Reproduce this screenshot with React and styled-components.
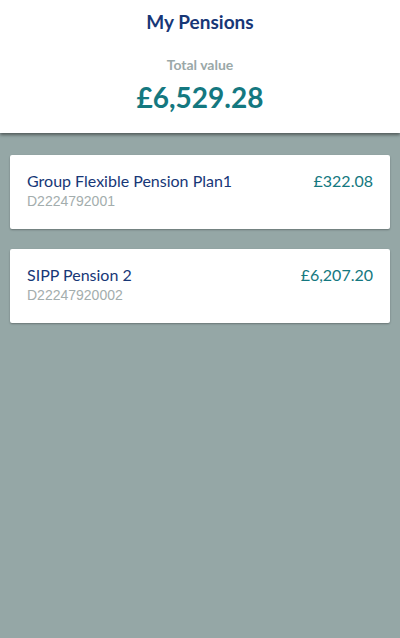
import styled, { createGlobalStyle } from "styled-components";

const GlobalStyle = createGlobalStyle`
  html, body {
    margin: 0;
    padding: 0;
    background: #95a7a6;
  }
  body {
    font-family: Lato, "Open Sans", sans-serif;
  }
`;

const pensions = [
  { name: "Group Flexible Pension Plan1", ref: "D2224792001", value: "£322.08" },
  { name: "SIPP Pension 2", ref: "D22247920002", value: "£6,207.20" },
];

const Page = styled.div`
  min-height: 638px;
  background: #95a7a6;
`;

const Header = styled.header`
  background: #fff;
  height: 133px;
  box-sizing: border-box;
  padding-top: 10px;
  display: flex;
  flex-direction: column;
  align-items: center;
  box-shadow: 0 2px 3px rgba(0, 0, 0, 0.45);
  position: relative;
`;

const Title = styled.h1`
  margin: 0;
  font-size: 19px;
  font-weight: 700;
  color: #173777;
  line-height: 24px;
`;

const TotalLabel = styled.div`
  margin-top: 22px;
  font-size: 14px;
  font-weight: 700;
  color: #9aa8a8;
  line-height: 18px;
`;

const TotalValue = styled.div`
  margin-top: 6px;
  font-size: 28px;
  font-weight: 700;
  color: #147880;
  line-height: 34px;
`;

const List = styled.div`
  display: flex;
  flex-direction: column;
  gap: 20px;
  padding: 22px 10px;
`;

const Card = styled.div`
  background: #fff;
  border-radius: 2px;
  box-shadow: 0 1px 2px rgba(0, 0, 0, 0.3);
  height: 74px;
  box-sizing: border-box;
  padding: 16px 17px 0 17px;
  display: flex;
  justify-content: space-between;
  align-items: flex-start;
`;

const Name = styled.div`
  font-size: 16px;
  color: #173777;
  line-height: 20px;
`;

const Ref = styled.div`
  font-family: "Liberation Sans", Arial, sans-serif;
  font-size: 14px;
  color: #a3adad;
  line-height: 17px;
  margin-top: 2px;
`;

const Amount = styled.div`
  font-size: 16px;
  color: #147880;
  line-height: 20px;
`;

export default function App() {
  return (
    <Page>
      <GlobalStyle />
      <Header>
        <Title>My Pensions</Title>
        <TotalLabel>Total value</TotalLabel>
        <TotalValue>£6,529.28</TotalValue>
      </Header>
      <List>
        {pensions.map((p) => (
          <Card key={p.ref}>
            <div>
              <Name>{p.name}</Name>
              <Ref>{p.ref}</Ref>
            </div>
            <Amount>{p.value}</Amount>
          </Card>
        ))}
      </List>
    </Page>
  );
}
